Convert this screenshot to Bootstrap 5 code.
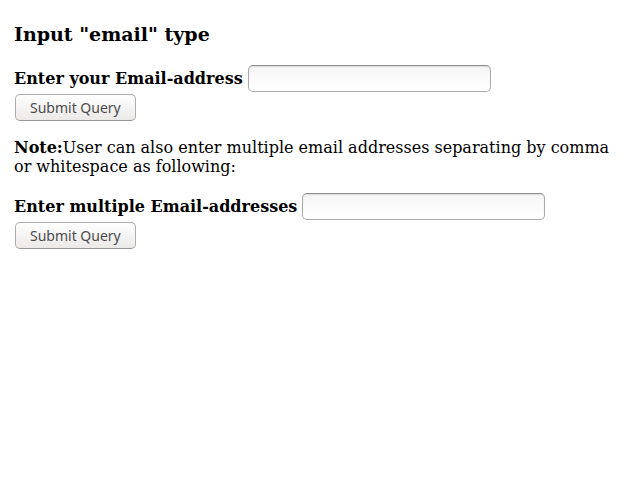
<!DOCTYPE html>
<html lang="en">
<head>
<meta charset="utf-8">
<meta name="viewport" content="width=device-width, initial-scale=1">
<title>Input "email" type</title>
<link href="https://cdn.jsdelivr.net/npm/bootstrap@5.3.0/dist/css/bootstrap.min.css" rel="stylesheet">
<style>
body { font-family: "DejaVu Serif", serif; font-size: 16px; line-height: 19px; color: #000; background: #fff; padding: 23px 14px; }
.page-title { font-size: 19px; line-height: 23px; font-weight: 700; margin-bottom: 19px; }
.field-row { gap: 0 5px; }
.email-field { width: 243px; height: 27px; padding: 2px 6px; border: 1px solid #aaa; border-top-color: #8f8f8f; border-radius: 5px; background: linear-gradient(#f5f5f5, #fff); box-shadow: inset 0 1px 1px #ddd; font-size: 14px; }
.query-btn { height: 27px; margin: 2px 1px; padding: 0 14px; border: 1px solid #b0aeac; border-bottom-color: #9a9896; border-radius: 5px; background: linear-gradient(#fff, #ebe9e8); color: #4c4c4c; font: 14px/25px "Noto Sans", sans-serif; }
.note { margin: 15px 0 17px; }
</style>
</head>
<body>
<main>
<h3 class="page-title">Input "email" type</h3>
<form>
<div class="field-row d-flex flex-wrap align-items-center">
<label class="fw-bold" for="email">Enter your Email-address</label>
<input class="email-field form-control" type="email" id="email">
</div>
<button class="query-btn btn" type="submit">Submit Query</button>
</form>
<p class="note"><b>Note:</b>User can also enter multiple email addresses separating by comma or whitespace as following:</p>
<form>
<div class="field-row d-flex flex-wrap align-items-center">
<label class="fw-bold" for="emails">Enter multiple Email-addresses</label>
<input class="email-field form-control" type="email" id="emails" multiple>
</div>
<button class="query-btn btn" type="submit">Submit Query</button>
</form>
</main>
<script src="https://cdn.jsdelivr.net/npm/bootstrap@5.3.0/dist/js/bootstrap.bundle.min.js"></script>
</body>
</html>
